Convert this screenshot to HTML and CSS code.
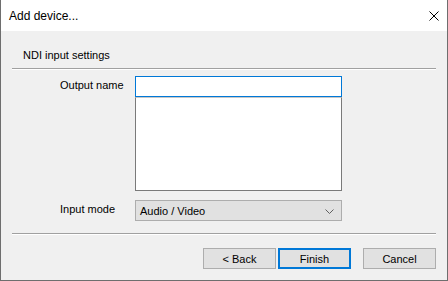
FILE: index.html
```html
<!DOCTYPE html>
<html lang="en">

<head>
    <meta charset="UTF-8">
    <title>Add device...</title>
    <link rel="stylesheet" href="styles.css">
</head>

<body>
    <div class="window">
        <div class="titlebar">
            <span class="title">Add device...</span>
            <span class="close">
                <svg width="10" height="10" viewBox="0 0 10 10">
                    <path d="M0.5 0.5 L9.5 9.5 M9.5 0.5 L0.5 9.5" stroke="#000" stroke-width="1" fill="none" />
                </svg>
            </span>
        </div>

        <div class="content">
            <div class="section-title">NDI input settings</div>
            <div class="rule"></div>

            <div class="form">
                <div class="row">
                    <label class="label" for="outname">Output name</label>
                    <div class="field-stack">
                        <input class="text-input" id="outname" type="text">
                        <div class="list-box"></div>
                    </div>
                </div>

                <div class="row">
                    <label class="label">Input mode</label>
                    <div class="combo">
                        <span>Audio / Video</span>
                        <svg width="9" height="5" viewBox="0 0 9 5">
                            <path d="M0.5 0.5 L4.5 4.5 L8.5 0.5" stroke="#606060" stroke-width="1" fill="none" />
                        </svg>
                    </div>
                </div>
            </div>

            <div class="rule rule-bottom"></div>

            <div class="buttons">
                <button class="btn">&lt; Back</button>
                <button class="btn btn-default">Finish</button>
                <button class="btn btn-cancel">Cancel</button>
            </div>
        </div>
    </div>
</body>

</html>
```

FILE: styles.css
```css
* {
    box-sizing: border-box;
}

body {
    margin: 0;
    font-family: "Liberation Sans", Arial, sans-serif;
    font-size: 11px;
    color: #000;
}

.window {
    width: 448px;
    height: 281px;
    display: flex;
    flex-direction: column;
    border: 1px solid #6e6e6e;
    border-top: none;
    background-color: #f0f0f0;
}

.titlebar {
    height: 31px;
    display: flex;
    align-items: center;
    justify-content: space-between;
    padding: 0 8px 0 8px;
    background-color: #fff;
}

.title {
    font-size: 12px;
}

.close {
    display: flex;
    margin-top: 1px;
}

.content {
    flex: 1;
    display: flex;
    flex-direction: column;
}

.section-title {
    margin-top: 16px;
    padding-left: 22px;
    line-height: 16px;
}

.rule {
    margin: 5px 11px 0;
    height: 2px;
    border-top: 1px solid #a0a0a0;
    border-bottom: 1px solid #fff;
}

.rule-bottom {
    margin-top: 12px;
}

.form {
    display: flex;
    flex-direction: column;
    gap: 9px;
    margin-top: 6px;
    padding-left: 59px;
}

.row {
    display: flex;
    align-items: flex-start;
}

.label {
    width: 75px;
    flex-shrink: 0;
    white-space: nowrap;
    line-height: 16px;
    padding-top: 1px;
}

.field-stack {
    width: 207px;
    display: flex;
    flex-direction: column;
}

.text-input {
    height: 21px;
    margin: 0;
    border: 1px solid #0078d7;
    background-color: #fff;
    outline: none;
    font: inherit;
}

.list-box {
    height: 94px;
    border: 1px solid #7a7a7a;
    border-top-color: #c8c8c8;
    background-color: #fff;
}

.combo {
    width: 207px;
    height: 21px;
    display: flex;
    align-items: center;
    justify-content: space-between;
    padding: 0 7px 0 4px;
    background-color: #e1e1e1;
    border: 1px solid #adadad;
}

.combo svg {
    margin-top: 1px;
}

.buttons {
    display: flex;
    justify-content: flex-end;
    gap: 2px;
    margin-top: 13px;
    padding-right: 11px;
}

.btn {
    width: 73px;
    height: 21px;
    margin: 0;
    padding: 0;
    font: inherit;
    color: #000;
    background-color: #e1e1e1;
    border: 1px solid #adadad;
}

.btn-default {
    border: 2px solid #0078d7;
}

.btn-cancel {
    margin-left: 10px;
}
```
